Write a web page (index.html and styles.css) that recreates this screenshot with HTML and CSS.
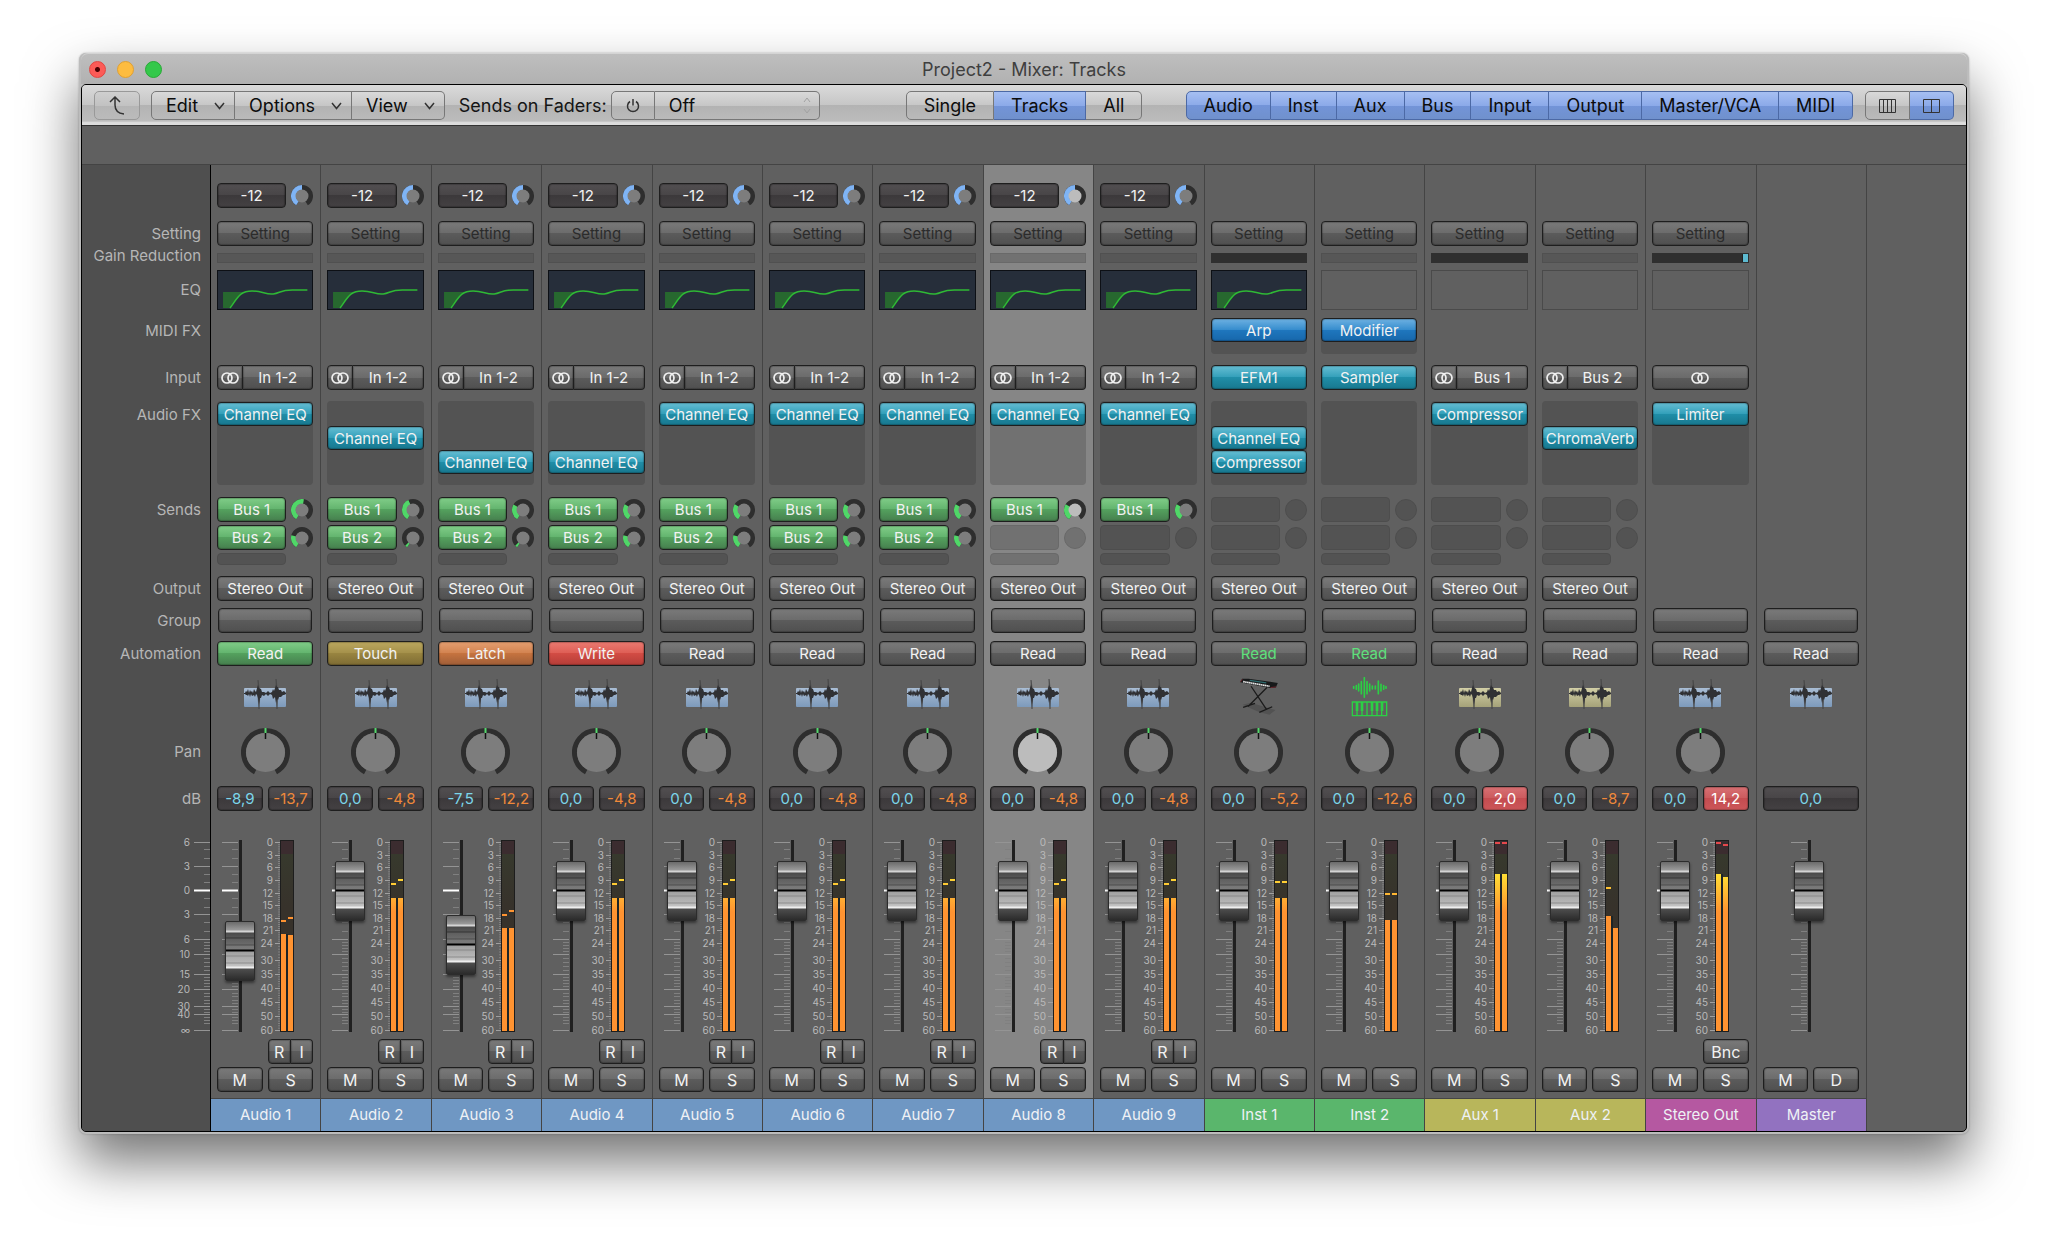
FILE: index.html
```html
<!DOCTYPE html>
<html lang="en">
<head>
  <meta charset="UTF-8">
  <title>Project2 - Mixer: Tracks</title>
  <link rel="stylesheet" href="styles.css">
</head>
<body>

  <main class="window">
    <header class="titlebar">
      <div class="lights">
        <button class="light red" aria-label="Close"></button>
        <button class="light yellow" aria-label="Minimize"></button>
        <button class="light green" aria-label="Zoom"></button>
      </div>
      <h1>Project2 - Mixer: Tracks</h1>
    </header>

    <div class="frame">
      <!-- Toolbar -->
      <nav class="toolbar">
        <div class="tools">
          <button class="tool back" aria-label="Back" disabled>
            <svg width="16" height="20" viewBox="0 0 16 20"><path d="M1 6 L6 1 L11 6 M6 1 V9 Q6 17 15 18" /></svg>
          </button>
          <div class="group menus">
            <button class="tool">Edit <svg width="11" height="8" viewBox="0 0 11 8"><path d="M1 1 L5.500 6.500 L10 1" /></svg></button>
            <button class="tool">Options <svg width="11" height="8" viewBox="0 0 11 8"><path d="M1 1 L5.500 6.500 L10 1" /></svg></button>
            <button class="tool">View <svg width="11" height="8" viewBox="0 0 11 8"><path d="M1 1 L5.500 6.500 L10 1" /></svg></button>
          </div>
          <label class="sends-label" for="sendsOnFaders">Sends on Faders:</label>
          <div class="group">
            <button class="tool power" aria-label="Sends on Faders on/off">
              <svg width="14" height="15" viewBox="0 0 14 15"><path d="M4 3.500 A5.500 5.500 0 1 0 10 3.500 M7 1 V7.500" /></svg>
            </button>
            <div class="select-wrap">
              <select id="sendsOnFaders" class="tool">
                <option>Off</option>
              </select>
              <svg class="updown" width="8" height="16" viewBox="0 0 8 16"><path d="M1 5 L4 1 L7 5 M1 12 L4 16 L7 12" /></svg>
            </div>
          </div>
        </div>

        <div class="group">
          <button class="tool">Single</button>
          <button class="tool on">Tracks</button>
          <button class="tool">All</button>
        </div>

        <div class="tools right">
          <div class="group">
            <button class="tool on">Audio</button>
            <button class="tool on">Inst</button>
            <button class="tool on">Aux</button>
            <button class="tool on">Bus</button>
            <button class="tool on">Input</button>
            <button class="tool on">Output</button>
            <button class="tool on">Master/VCA</button>
            <button class="tool on">MIDI</button>
          </div>
          <div class="group widths">
            <button class="tool" aria-label="Narrow strips">
              <svg width="17" height="14" viewBox="0 0 17 14"><path d="M.5 .5 H16.500 V13.500 H.5 Z M4.500 .5 V13.500 M8.500 .5 V13.500 M12.500 .5 V13.500" /></svg>
            </button>
            <button class="tool on" aria-label="Wide strips">
              <svg width="17" height="14" viewBox="0 0 17 14"><path d="M.5 .5 H16.500 V13.500 H.5 Z M8.500 .5 V13.500" /></svg>
            </button>
          </div>
        </div>
      </nav>

      <div class="band"></div>

      <!-- Mixer, strips are filled in by script.js -->
      <div class="mixer">
        <div class="strip labels">
          <span></span>
          <span>Setting</span>
          <span class="thin">Gain Reduction</span>
          <span class="tall">EQ</span>
          <span>MIDI FX</span>
          <span>Input</span>
          <span class="fx-label">Audio FX</span>
          <span>Sends</span>
          <span>Output</span>
          <span>Group</span>
          <span>Automation</span>
          <span></span>
          <span class="pan-label">Pan</span>
          <span>dB</span>
          <div id="mainScale"></div>
        </div>
        <div id="channels" class="channels"></div>
      </div>
    </div>
  </main>

  <script src="script.js"></script>
</body>
</html>
```

FILE: styles.css
```css
* {
  box-sizing: border-box;
}

body {
  margin: 0;
  padding: 53px 79px 100px;
  background: #fff;
  font-family: Inter, "Liberation Sans", sans-serif;
  font-size: 15px;
  color: #b6b6b6;
}

button,
input,
select {
  font: inherit;
  margin: 0;
  padding: 0;
}

svg {
  display: block;
}

.window {
  padding: 0 2px 2px;
  background: #bcbcbc;
  border-radius: 7px;
  box-shadow: 0 0 2px rgba(0, 0, 0, 0.3), 0 28px 54px rgba(0, 0, 0, 0.55);
}

/* title bar */

.titlebar {
  display: grid;
  grid-template-columns: 1fr auto 1fr;
  align-items: center;
  height: 31px;
  padding: 0 8px;
  background: linear-gradient(#bebebe, #b1b1b1);
  border-top: 1px solid #d4d4d4;
  border-radius: 7px 7px 0 0;
}

.titlebar h1 {
  margin: 0;
  font-size: 18px;
  font-weight: 400;
  color: #3f3f3f;
}

.lights {
  display: flex;
  gap: 11px;
}

.light {
  width: 17px;
  height: 17px;
  border: 1px solid;
  border-radius: 50%;
}

.light.red {
  background: radial-gradient(circle, #4a0002 2px, #fc5b57 3px);
  border-color: #e2443f;
}

.light.yellow {
  background: #fdbc40;
  border-color: #dfa034;
}

.light.green {
  background: #34c84a;
  border-color: #27aa35;
}

.frame {
  border: 1px solid #000;
  border-radius: 5px;
  overflow: hidden;
  background: #606060;
}

/* toolbar */

.toolbar {
  display: grid;
  grid-template-columns: 1fr auto 1fr;
  align-items: center;
  height: 41px;
  padding: 1px 12px 0;
  background: linear-gradient(#dadada, #c6c6c6 50%, #b3b3b3 50%, #bcbcbc 90%, #dcdcdc 94%);
  border-bottom: 1px solid #333;
}

.tools {
  display: flex;
  align-items: center;
}

.tools.right {
  justify-content: flex-end;
  gap: 12px;
}

.group {
  display: flex;
}

.tool {
  height: 29px;
  padding: 0 17px;
  font-size: 18px;
  color: #0c0c0c;
  background: linear-gradient(#d9d9d9, #c6c6c6 50%, #b2b2b2 50%, #bababa);
  border: 1px solid #777;
  border-left-width: 0;
}

.tool svg,
.updown {
  fill: none;
  stroke: #333;
  stroke-width: 1.5;
}

.group > .tool:first-child,
.back {
  border-left-width: 1px;
  border-radius: 5px 0 0 5px;
}

.group > .tool:last-child,
.select-wrap .tool {
  border-radius: 0 5px 5px 0;
}

.tool.on {
  background: linear-gradient(#a6bff2, #8caae9 50%, #7394d8 50%, #7091cd);
  border-color: #4c69a5;
}

.back {
  display: flex;
  justify-content: center;
  width: 46px;
  padding: 4px 0;
  margin-right: 11px;
  border-color: #999;
  border-radius: 5px;
  background: linear-gradient(#cfcfcf, #c2c2c2 50%, #b5b5b5 50%, #bbb);
}

.menus .tool {
  display: flex;
  align-items: center;
  gap: 16px;
  padding: 0 9px 0 14px;
}

.sends-label {
  margin: 0 4px 0 14px;
  font-size: 18px;
  color: #151515;
}

.power {
  padding: 0 14px;
}

.select-wrap {
  position: relative;
}

.select-wrap .tool {
  appearance: none;
  width: 165px;
  padding: 0 14px;
}

.updown {
  position: absolute;
  top: 6px;
  right: 9px;
  stroke: #a2a2a2;
  stroke-width: 1;
}

.widths .tool {
  padding: 0 13px;
}

.widths .tool svg {
  stroke-width: 1;
}

.band {
  height: 39px;
  border-bottom: 1px solid #444;
}

/* mixer grid, the labels and all strips share the same rows */

.mixer {
  display: flex;
  padding-right: 99px;
}

.channels {
  flex: 1;
  display: grid;
  grid-template-columns: repeat(15, 1fr);
}

.strip {
  display: grid;
  grid-template-rows: 38px 32px 17px 48px 47px 36px 96px 79px 32px 33px 36px 51px 58px 54px 199px 28px 31px 33px;
  align-items: start;
  padding: 18px 7px 0 6px;
  border-right: 1px solid #444;
  min-width: 0;
}

.strip > * {
  min-width: 0;
}

.strip.selected {
  background: #868686;
}

.labels {
  flex: none;
  width: 129px;
  padding: 18px 0 0;
  background: #4f4f4f;
  border-right-color: #000;
  text-align: right;
}

.labels span {
  padding-right: 9px;
  line-height: 25px;
  white-space: nowrap;
}

.labels .thin {
  line-height: 6px;
}

.labels .tall {
  line-height: 40px;
}

.labels .fx-label {
  line-height: 27px;
}

.labels .pan-label {
  line-height: 47px;
}

.labels svg {
  margin-left: auto;
}

/* strip controls */

.btn,
.field {
  display: block;
  width: 100%;
  min-width: 0;
  height: 25px;
  color: #f2f2f2;
  text-align: center;
  white-space: nowrap;
  border: 1px solid #1e1e1e;
  border-radius: 4px;
  background: linear-gradient(#7a7a7a, #6b6b6b 50%, #5b5b5b 50%, #505050);
  box-shadow: inset 0 0 1px 1px rgba(0, 0, 0, 0.22);
}

.btn svg {
  margin: 0 auto;
}

.btn.dim {
  color: #2b2b2b;
}

.btn.group-slot {
  width: auto;
  margin: 0 1px;
}

.btn.lit {
  color: #5fe07c;
}

.btn.teal {
  background: linear-gradient(#65bdd3, #329fb9 50%, #208ea8 50%, #18788f);
}

.btn.blue {
  background: linear-gradient(#6db1e2, #358ccd 50%, #1f77be 50%, #1767ab);
}

.btn.green {
  background: linear-gradient(#80cd88, #62b36d 50%, #54a15e 50%, #467f4e);
}

.btn.touch {
  background: linear-gradient(#bba75e, #a4904a 50%, #988440 50%, #7e6c34);
}

.btn.latch {
  background: linear-gradient(#e39e70, #d2824f 50%, #c5733f 50%, #a05e38);
}

.btn.write {
  background: linear-gradient(#ea7a71, #de5d54 50%, #d24c44 50%, #b53d38);
}

.field {
  background: linear-gradient(#524f51, #484547 50%, #3c393b 50%, #444143);
}

.field.volume {
  color: #7cd6ea;
}

.field.peak {
  color: #f0893a;
}

.field.clip {
  color: #fff;
  background: linear-gradient(#d87073, #cb5a5d 50%, #c44c50 50%, #cc5659);
}

.pair {
  display: grid;
  grid-template-columns: 1fr 1fr;
  gap: 5px;
}

.pair.one {
  grid-template-columns: 1fr;
}

.with-knob {
  display: grid;
  grid-template-columns: 1fr 22px;
  align-items: center;
  gap: 5px;
}

.input-row {
  display: flex;
}

.input-row .format {
  flex: none;
  width: 26px;
}

.input-row .format:not(:only-child) {
  border-radius: 4px 0 0 4px;
}

.input-row .format:only-child {
  width: 100%;
}

.input-row .source {
  border-left-width: 0;
  border-radius: 0 4px 4px 0;
}

.rec {
  display: flex;
  grid-column: 2;
}

.rec .btn:first-child:not(:only-child) {
  border-radius: 4px 0 0 4px;
}

.rec .btn + .btn {
  border-left-width: 0;
  border-radius: 0 4px 4px 0;
}

.big .btn {
  font-size: 16px;
}

.gain {
  height: 10px;
  background: #575757;
  border: 1px solid #505050;
}

.gain.active {
  background: #2f2f2f;
  border-color: #2f2f2f;
}

.gain.reducing {
  background: linear-gradient(to left, #5dbad0 5px, #111 5px, #2f2f2f 6px);
}

.eq {
  height: 40px;
  border: 1px solid #4a4a4a;
}

.eq.curve {
  background: #262e3a;
  border-color: #0d1015;
}

.eq svg {
  width: 100%;
  height: 100%;
}

.slot {
  background: #535353;
  border: 1px solid #4d4d4d;
  border-radius: 4px;
}

.selected .slot,
.selected .gain {
  background: #717171;
  border-color: #696969;
}

.midi-slot {
  height: 36px;
}

.fx-slot {
  height: 84px;
}

.fx-slot,
.midi-slot {
  display: grid;
  grid-auto-rows: 24px;
  border-width: 0;
}

.fx-slot .btn,
.midi-slot .btn {
  height: 24px;
}

.fx-slot {
  padding-top: 1px;
}

.sends {
  display: grid;
  gap: 3px;
}

.send-slot {
  height: 25px;
}

.send-slot.round {
  height: 22px;
  border-radius: 50%;
}

.send-slot.more {
  height: 12px;
  margin-right: 27px;
}

.track-icon {
  justify-self: center;
}

/* rotary knobs */

.knob {
  position: relative;
  justify-self: center;
}

.knob input {
  position: absolute;
  inset: 0;
  width: 100%;
  height: 100%;
  opacity: 0;
}

.knob .face {
  fill: #7d7d7d;
}

.selected .knob .face {
  fill: #bcbcbc;
}

/* fader and meter */

.levels {
  display: flex;
  gap: 2px;
  padding-left: 5px;
}

.levels svg,
.labels svg {
  overflow: visible;
}

.levels.centered {
  padding-left: 28px;
}

.fader {
  position: relative;
  width: 34px;
  height: 192px;
}

.fader input {
  position: absolute;
  top: -27px;
  left: 3px;
  width: 30px;
  height: 248px;
  appearance: none;
  background: none;
  writing-mode: vertical-lr;
  direction: rtl;
}

.fader input::-webkit-slider-thumb {
  appearance: none;
  width: 30px;
  height: 60px;
  border: 1px solid #2c2c2c;
  border-radius: 2px;
  background: linear-gradient(
    #6b6b6b, #9a9a9a 8px, #d4d4d4 9px, #d4d4d4 10px,
    #4a4a4a 11px, #555 15px, #333 16px, #5f5f5f 17px, #6a6a6a 22px, #4c4c4c 23px, #777 24px, #7a7a7a 27px,
    #000 28px, #000 29px,
    #a0a0a0 30px, #a8a8a8 33px, #888 34px, #aaa 35px, #b5b5b5 40px, #8c8c8c 41px, #bbb 42px, #c4c4c4 44px,
    #eee 45px, #eee 46px, #4d4d4d 47px, #2b2b2b);
  box-shadow: 0 2px 3px rgba(0, 0, 0, 0.45);
}

.scale-text {
  font-size: 10px;
  fill: #bababa;
  text-anchor: end;
}

.name {
  height: 33px;
  margin: 0 -7px 0 -6px;
  border-top: 1px solid #444;
  color: #eef1f5;
  line-height: 32px;
  text-align: center;
}

.name.audio {
  background: #6f97c3;
}

.name.inst {
  background: #5ab66c;
}

.name.aux {
  background: #b8b65b;
}

.name.out {
  background: #b558a1;
}

.name.master {
  background: #9272c0;
}
```

FILE: script.js
```js
// y positions inside the 192px tall fader area
const faderMarks = [['6', 2], ['3', 26], ['0', 50], ['3', 74], ['6', 99], ['10', 114], ['15', 134], ['20', 149], ['30', 166], ['40', 174], ['∞', 190]];
const faderSmall = [9, 18, 34, 42, 58, 67, 82, 91, 102, 105, 108, 111, 118, 122, 126, 130, 137, 140, 143, 146, 153, 156, 160, 163, 169, 172, 177, 180, 183];
const meterMarks = [[0, 2], [3, 15], [6, 27], [9, 40], [12, 53], [15, 65], [18, 78], [21, 90], [24, 103], [30, 120], [35, 134], [40, 148], [45, 162], [50, 176], [60, 190]];

const audio = (n, extra) => Object.assign({
  name: 'Audio ' + n, kind: 'audio', fader: '-12', eq: true, input: 'In 1-2', fx: ['Channel EQ'],
  sends: [['Bus 1', -58], ['Bus 2', -75]], mode: 'Read', icon: 'wave', volume: '0,0', peak: '-4,8',
  pos: 140, bars: [58, 58], peaks: [44, 40], rec: ['R', 'I'], keys: ['M', 'S']
}, extra);

const other = (name, kind, extra) => Object.assign({
  name, kind, sends: [], mode: 'Read', volume: '0,0', pos: 140, keys: ['M', 'S'], rec: []
}, extra);

const channels = [
  audio(1, { sends: [['Bus 1', 10], ['Bus 2', -75]], modeClass: 'green', volume: '-8,9', peak: '-13,7', pos: 80, bars: [94, 95], peaks: [81, 78] }),
  audio(2, { fx: ['', 'Channel EQ'], sends: [['Bus 1', -25], ['Bus 2', -135]], mode: 'Touch', modeClass: 'touch' }),
  audio(3, { fx: ['', '', 'Channel EQ'], sends: [['Bus 1', -60], ['Bus 2', -135]], mode: 'Latch', modeClass: 'latch', volume: '-7,5', peak: '-12,2', pos: 86, bars: [88, 88], peaks: [75, 71] }),
  audio(4, { fx: ['', '', 'Channel EQ'], mode: 'Write', modeClass: 'write' }),
  audio(5), audio(6), audio(7),
  audio(8, { sends: [['Bus 1', -58]], selected: true }),
  audio(9, { sends: [['Bus 1', -58]] }),
  other('Inst 1', 'inst', { gain: 'active', eq: true, midi: 'Arp', instrument: 'EFM1', fx: ['', 'Channel EQ', 'Compressor'], modeClass: 'lit', icon: 'keys', peak: '-5,2', bars: [58, 58], peaks: [42, 42] }),
  other('Inst 2', 'inst', { midi: 'Modifier', instrument: 'Sampler', fx: [], modeClass: 'lit', icon: 'sampler', peak: '-12,6', bars: [80, 80], peaks: [54, 54] }),
  other('Aux 1', 'aux', { gain: 'active', input: 'Bus 1', fx: ['Compressor'], icon: 'wave', peak: '2,0', clip: true, bars: [34, 34], peaks: [3, 3] }),
  other('Aux 2', 'aux', { input: 'Bus 2', fx: ['', 'ChromaVerb'], icon: 'wave', peak: '-8,7', bars: [76, 88], peaks: [48] }),
  other('Stereo Out', 'out', { gain: 'active reducing', input: '', fx: ['Limiter'], sends: null, icon: 'wave', peak: '14,2', clip: true, bars: [34, 37], peaks: [3, 5], rec: ['Bnc'] }),
  other('Master', 'master', { master: true, sends: null, icon: 'wave', keys: ['M', 'D'] })
];

function button(text, cls = '') {
  return `<button class="btn ${cls}">${text}</button>`;
}

// arc of a circle, angles in degrees clockwise from the top
function arc(c, r, from, to) {
  const point = a => {
    const rad = a * Math.PI / 180;
    return (c + r * Math.sin(rad)).toFixed(2) + ' ' + (c - r * Math.cos(rad)).toFixed(2);
  };
  return `M${point(from)} A${r} ${r} 0 ${to - from > 180 ? 1 : 0} 1 ${point(to)}`;
}

function smallKnob(label, angle, color) {
  return `<label class="knob">
    <svg width="22" height="22" viewBox="0 0 22 22" fill="none" stroke-width="5">
      <path d="${arc(11, 8.5, -148, 148)}" stroke="#2e2e2e" />
      <path d="${arc(11, 8.5, -148, angle)}" stroke="${color}" />
      <circle class="face" cx="11" cy="11" r="6.500" />
    </svg>
    <input type="range" min="-148" max="148" value="${angle}" aria-label="${label}">
  </label>`;
}

function panKnob(name) {
  return `<label class="knob">
    <svg width="49" height="49" viewBox="0 0 49 49">
      <path d="${arc(24.5, 22, -152, 152)}" fill="none" stroke="#2e2e2e" stroke-width="5" />
      <circle class="face" cx="24.500" cy="24.500" r="19.500" />
      <path d="M24.500 0 V5" stroke="#55d96d" stroke-width="2" />
      <path d="M24.500 5 V11" stroke="#111" stroke-width="1.500" />
    </svg>
    <input type="range" min="-64" max="63" value="0" aria-label="${name} pan">
  </label>`;
}

const stereo = `<svg width="18" height="12" viewBox="0 0 18 12" fill="none" stroke="#f0f0f0" stroke-width="1.700"><circle cx="6" cy="6" r="5" /><circle cx="12" cy="6" r="5" /></svg>`;

const eqCurve = `<svg viewBox="0 0 94 38" preserveAspectRatio="none">
  <path d="M5 21 H26 C20 24 17 32 12 37 H5 Z" fill="#27682f" />
  <path d="M12 37 C20 26 22 20 34 20 C44 20 48 24 55 23 C62 22 62 19 74 19 H89" fill="none" stroke="#2fb935" stroke-width="1.500" />
</svg>`;

function waveIcon(kind) {
  const body = kind === 'aux' ? ['#d2cfa6', '#a5a279'] : ['#a9bdd4', '#7d9abb'];
  return `<svg class="track-icon" width="42" height="33" viewBox="0 0 42 33">
    <defs><linearGradient id="body-${kind}" x2="0" y2="1"><stop stop-color="${body[0]}" /><stop offset="1" stop-color="${body[1]}" /></linearGradient></defs>
    <rect y="11" width="42" height="19" rx="1" fill="url(#body-${kind})" />
    <path d="M14 3 L15 10 L16 16 L15 32 L14 20 Z M32 2 L33 10 L34 16 L33 32 L32 20 Z" fill="#474747" stroke="#474747" stroke-width=".6" />
    <path d="M0 16 H1 L2 14 L3 15 L4 12 L5 16 L6 13 L7 15 L8 14 L9 16 L10 12 L11 14 L12 15 L13 11 L14 8 L15 11 L17 12 L18 15 L20 15 L22 16 L24 14 L26 16 L28 15 L29 12 L30 14 L32 8 L33 10 L34 10 L35 13 L37 13 L38 15 L40 14 L42 16 V17
      L40 18 L39 18 L37 20 L35 20 L34 23 L33 22 L32 26 L31 20 L29 22 L28 18 L26 17 L24 19 L22 17 L20 19 L18 18 L17 21 L16 21 L15 27 L14 21 L13 18 L12 17 L11 20 L10 18 L8 19 L7 17 L6 20 L5 17 L4 19 L3 18 L2 18 L1 17 H0 Z" fill="#303134" />
  </svg>`;
}

const keysIcon = `<svg class="track-icon" width="40" height="39" viewBox="180 112 120 118">
  <path d="M190 196 L215 190 L290 212 L272 226 L240 218 Z" fill="#525252" />
  <path d="M216 140 L262 209 M264 144 L207 201 M192 204 L228 192 M241 219 L280 202" fill="none" stroke="#1b1b1b" stroke-width="4" />
  <path d="M189 117 L208 117 L297 130 L291 144 L274 145 L183 128 Z" fill="#17191a" />
  <path d="M192 126 L272 140" stroke="#e6e6e6" stroke-width="5" stroke-dasharray="5 1" />
  <path d="M212 122 L262 130" stroke="#2f6b6e" stroke-width="4" />
  <path d="M184 127 L190 119 M275 144 L292 142" stroke="#6a2329" stroke-width="3" />
</svg>`;

const samplerIcon = `<svg class="track-icon" width="40" height="40" viewBox="508 108 120 120" stroke="#2bd044" fill="none">
  <path d="M522 137 V142 M530 134 V145 M537 129 V150 M545 122 V158 M554 110 V169 M562 122 V158 M570 129 V150 M578 135 V144 M587 135 V144 M596 120 V158 M604 130 V150 M612 134 V145 M619 137 V142" stroke-width="5" stroke-linecap="round" />
  <path d="M518 183 H621 V224 H518 Z M532 208 V224 M547 208 V224 M562 183 V224 M577 208 V224 M592 208 V224 M606 183 V224" stroke-width="4" />
  <path d="M532 183 V210 M547 183 V210 M577 183 V210 M592 183 V210 M607 183 V210" stroke-width="8" />
</svg>`;

function trackIcon(ch) {
  if (ch.icon === 'keys') return keysIcon;
  if (ch.icon === 'sampler') return samplerIcon;
  return waveIcon(ch.kind);
}

// long and short tick lines, right edge at x
function faderTicks(x) {
  const long = faderMarks.map(([, y], i) =>
    `<path d="M${x - 16} ${y + .5} H${x}" stroke="${i === 2 ? '#fff' : '#949494'}" stroke-width="${i === 2 ? 2 : 1}" />`).join('');
  const small = faderSmall.map(y => `M${x - 6} ${y + .5} H${x}`).join(' ');
  return long + `<path d="${small}" stroke="#808080" />`;
}

function fader(ch) {
  return `<div class="fader">
    <svg width="34" height="192">${faderTicks(16)}<rect x="17" width="3" height="192" fill="#202020" /></svg>
    <input type="range" min="0" max="188" value="${ch.pos}" aria-label="${ch.name} volume">
  </div>`;
}

function meter(ch) {
  let ticks = '';
  let dots = '';
  meterMarks.forEach(([db, y], i) => {
    ticks += `<text class="scale-text" x="15" y="${y + 4}">${db}</text><path d="M17 ${y + .5} H22" stroke="#a0a0a0" />`;
    const next = meterMarks[i + 1];
    if (!next) return;
    for (let n = 1; n < 6; n++) {
      dots += `M20 ${(y + .5 + (next[1] - y) * n / 6).toFixed(1)} h2 `;
    }
  });
  const bars = ch.bars.map((y, i) => `<rect x="${23 + i * 7}" y="${y}" width="5" height="${191 - y}" fill="url(#level)" />`).join('');
  const peaks = ch.peaks.map((y, i) => `<rect x="${23 + i * 7}" y="${y - 1}" width="5" height="2" fill="${y < 10 ? '#e5484c' : 'url(#level)'}" />`).join('');
  return `<svg width="36" height="192">
    <defs>
      <linearGradient id="level" gradientUnits="userSpaceOnUse" x1="0" y1="33" x2="0" y2="72"><stop stop-color="#ffe034" /><stop offset="1" stop-color="#ff9331" /></linearGradient>
      <linearGradient id="well" x2="0" y2="1"><stop stop-color="#37392d" /><stop offset=".3" stop-color="#37322b" /></linearGradient>
    </defs>
    ${ticks}<path d="${dots}" stroke="#8a8a8a" stroke-width=".8" />
    <rect x="22" width="14" height="192" fill="#1d1d1d" />
    <rect x="23" y="1" width="12" height="13" fill="#3b2c2f" />
    <rect x="23" y="14" width="12" height="177" fill="url(#well)" />
    <rect x="28" y="${Math.min(...ch.bars)}" width="2" height="${192 - Math.min(...ch.bars)}" fill="#1c2426" />
    ${bars}${peaks}
  </svg>`;
}

function inputRow(ch) {
  if (ch.instrument) return button(ch.instrument, 'teal');
  const format = `<button class="btn format" aria-label="Format">${stereo}</button>`;
  return `<div class="input-row">${format}${ch.input ? button(ch.input, 'source') : ''}</div>`;
}

function sendRows(ch) {
  if (!ch.sends) return '<div></div>';
  let html = '';
  for (let i = 0; i < 2; i++) {
    const send = ch.sends[i];
    html += send
      ? `<div class="with-knob">${button(send[0], 'green')}${smallKnob(send[0] + ' level', send[1], '#50d768')}</div>`
      : '<div class="with-knob"><div class="slot send-slot"></div><div class="slot send-slot round"></div></div>';
  }
  return `<div class="sends">${html}<div class="slot send-slot more"></div></div>`;
}

function strip(ch) {
  const plugins = (ch.fx || []).map(fx => fx ? button(fx, 'teal') : '<span></span>').join('');
  const top = ch.master ? '<div></div>'.repeat(7) : `
    <div class="with-knob">${ch.fader ? `<input class="field" type="text" value="${ch.fader}" aria-label="Send level">${smallKnob('Send on fader', 0, '#7fb4f5')}` : ''}</div>
    ${button('Setting', 'dim')}
    <div class="gain ${ch.gain || ''}"></div>
    <div class="eq ${ch.eq ? 'curve' : ''}">${ch.eq ? eqCurve : ''}</div>
    <div class="${ch.midi ? 'slot midi-slot' : ''}">${ch.midi ? button(ch.midi, 'blue') : ''}</div>
    ${inputRow(ch)}
    <div class="slot fx-slot">${plugins}</div>`;
  return `<section class="strip ${ch.selected ? 'selected' : ''}">
    ${top}
    ${sendRows(ch)}
    ${ch.sends ? button('Stereo Out') : '<div></div>'}
    <button class="btn group-slot" aria-label="Group"></button>
    ${button(ch.mode, ch.modeClass)}
    ${trackIcon(ch)}
    ${ch.master ? '<div></div>' : panKnob(ch.name)}
    <div class="pair ${ch.master ? 'one' : ''}">
      <input class="field volume" type="text" value="${ch.volume}" aria-label="${ch.name} dB">
      ${ch.peak ? `<button class="field peak ${ch.clip ? 'clip' : ''}">${ch.peak}</button>` : ''}
    </div>
    <div class="levels ${ch.master ? 'centered' : ''}">${fader(ch)}${ch.bars ? meter(ch) : ''}</div>
    <div class="pair big"><div class="rec">${ch.rec.map(t => button(t)).join('')}</div></div>
    <div class="pair big">${ch.keys.map(t => button(t)).join('')}</div>
    <div class="name ${ch.kind}">${ch.name}</div>
  </section>`;
}

document.getElementById('channels').innerHTML = channels.map(strip).join('');

document.getElementById('mainScale').innerHTML = `<svg width="50" height="196">
  ${faderTicks(50)}
  ${faderMarks.map(([db, y]) => `<text class="scale-text" x="30" y="${y + 4}">${db}</text>`).join('')}
</svg>`;
```
